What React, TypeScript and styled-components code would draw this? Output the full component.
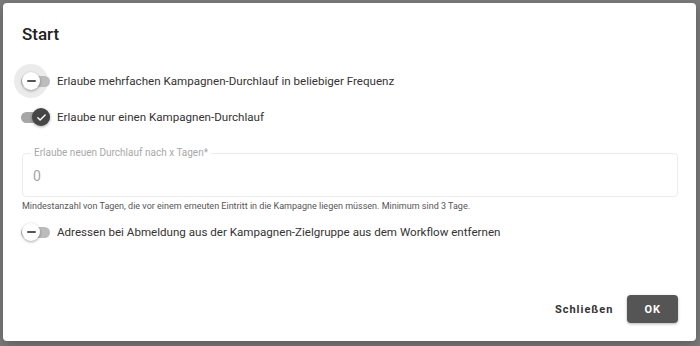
import React from "react";
import styled, { createGlobalStyle } from "styled-components";

const GlobalStyle = createGlobalStyle`
  html, body {
    margin: 0;
    padding: 0;
    width: 700px;
    height: 346px;
    overflow: hidden;
    background: #7b7b7b;
    font-family: Roboto, "Liberation Sans", sans-serif;
  }
`;

const Backdrop = styled.div`
  width: 700px;
  height: 346px;
  padding: 3px 4px 5px 3px;
  box-sizing: border-box;
`;

const Dialog = styled.div`
  display: flex;
  flex-direction: column;
  height: 100%;
  box-sizing: border-box;
  padding: 20px 18px 18px 19px;
  background: #fff;
  border-radius: 4px;
  box-shadow: 0 4px 12px rgba(0, 0, 0, 0.25);
`;

const Title = styled.h2`
  margin: 0 0 18px 0;
  font-size: 17px;
  line-height: 22px;
  font-weight: 500;
  color: #222;
`;

const Row = styled.label`
  position: relative;
  z-index: 0;
  display: flex;
  align-items: center;
  gap: 7px;
  height: 36px;
`;

const Track = styled.span<{ $on?: boolean; $focus?: boolean }>`
  position: relative;
  display: inline-block;
  width: 29px;
  height: 11px;
  margin-left: -1px;
  border-radius: 6px;
  background: ${(p) => (p.$on ? "#a6a6a6" : "#bcbcbc")};
  flex-shrink: 0;

  &::before {
    content: "";
    display: ${(p) => (p.$focus ? "block" : "none")};
    position: absolute;
    z-index: -1;
    left: -7px;
    top: 50%;
    width: 34px;
    height: 34px;
    margin-top: -17px;
    border-radius: 50%;
    background: #ebebeb;
  }
`;

const Thumb = styled.span<{ $on?: boolean }>`
  position: absolute;
  top: 50%;
  left: ${(p) => (p.$on ? "11px" : "1px")};
  width: 18px;
  height: 18px;
  margin-top: -9px;
  border-radius: 50%;
  display: flex;
  align-items: center;
  justify-content: center;
  background: ${(p) => (p.$on ? "#464646" : "#fff")};
  box-shadow: 0 1px 3px rgba(0, 0, 0, 0.35);
`;

const Minus = styled.span`
  width: 9px;
  height: 2px;
  background: #555;
  border-radius: 1px;
`;

const RowText = styled.span`
  font-size: 11.6px;
  color: #333;
`;

const Field = styled.div`
  position: relative;
  margin-top: 18px;
  height: 44px;
  border: 1px solid #ececec;
  border-radius: 4px;
  box-sizing: border-box;
  display: flex;
  align-items: center;
  padding-left: 10px;
`;

const FieldLabel = styled.span`
  position: absolute;
  top: -7px;
  left: 8px;
  padding: 0 3px;
  background: #fff;
  font-size: 10px;
  line-height: 12px;
  color: #a8a8a8;
`;

const FieldValue = styled.span`
  font-size: 14px;
  color: #a5a5a5;
  margin-top: 1px;
`;

const Helper = styled.div`
  margin: 3px 0 2px 0;
  font-size: 9px;
  line-height: 12px;
  color: #555;
`;

const Actions = styled.div`
  margin-top: auto;
  display: flex;
  justify-content: flex-end;
  align-items: center;
  gap: 6px;
`;

const Button = styled.button<{ $primary?: boolean }>`
  height: 28px;
  padding: 0 ${(p) => (p.$primary ? "17px" : "8px")};
  border: none;
  border-radius: 4px;
  font-family: Roboto, "Liberation Sans", sans-serif;
  font-size: 11px;
  font-weight: 700;
  letter-spacing: 1px;
  background: ${(p) => (p.$primary ? "#555555" : "transparent")};
  color: ${(p) => (p.$primary ? "#fff" : "#333")};
  box-shadow: ${(p) => (p.$primary ? "0 1px 3px rgba(0,0,0,0.3)" : "none")};
`;

function Switch({ on, focus }: { on?: boolean; focus?: boolean }) {
  return (
    <Track $on={on} $focus={focus}>
      <Thumb $on={on}>
        {on ? (
          <svg width="11" height="11" viewBox="0 0 24 24">
            <path
              d="M4 12.5l5 5L20 6.5"
              fill="none"
              stroke="#fff"
              strokeWidth="3"
              strokeLinecap="round"
              strokeLinejoin="round"
            />
          </svg>
        ) : (
          <Minus />
        )}
      </Thumb>
    </Track>
  );
}

export default function App() {
  return (
    <>
      <GlobalStyle />
      <Backdrop>
        <Dialog>
          <Title>Start</Title>
          <Row>
            <Switch focus />
            <RowText>Erlaube mehrfachen Kampagnen-Durchlauf in beliebiger Frequenz</RowText>
          </Row>
          <Row>
            <Switch on />
            <RowText>Erlaube nur einen Kampagnen-Durchlauf</RowText>
          </Row>
          <Field>
            <FieldLabel>Erlaube neuen Durchlauf nach x Tagen*</FieldLabel>
            <FieldValue>0</FieldValue>
          </Field>
          <Helper>
            Mindestanzahl von Tagen, die vor einem erneuten Eintritt in die Kampagne liegen müssen. Minimum sind 3 Tage.
          </Helper>
          <Row>
            <Switch />
            <RowText>Adressen bei Abmeldung aus der Kampagnen-Zielgruppe aus dem Workflow entfernen</RowText>
          </Row>
          <Actions>
            <Button>Schließen</Button>
            <Button $primary>OK</Button>
          </Actions>
        </Dialog>
      </Backdrop>
    </>
  );
}
